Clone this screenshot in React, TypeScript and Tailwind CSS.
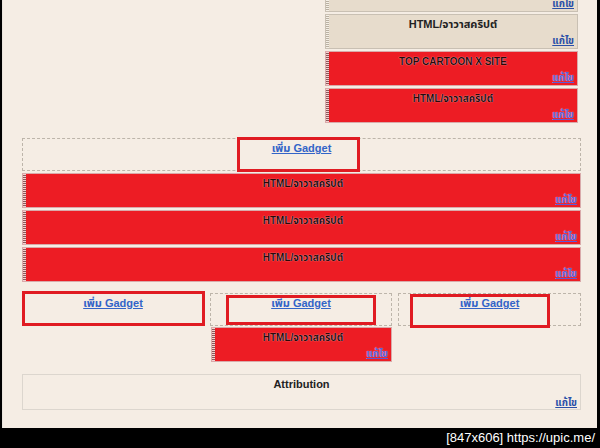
const font = "font-['Liberation_Sans','Noto_Sans','Noto_Sans_Thai',sans-serif]";

function EditLink({ onRed }: { onRed?: boolean }) {
  return (
    <a
      href="#"
      className={
        onRed
          ? "text-[10px] font-bold underline text-[#5a5ad8] [text-shadow:0_0_1px_#fff]"
          : "text-[10px] font-bold underline text-[#2a4fa8]"
      }
    >
      แก้ไข
    </a>
  );
}

function Strip({ light }: { light?: boolean }) {
  return (
    <div
      className={
        light
          ? "w-[3px] shrink-0 bg-[repeating-linear-gradient(0deg,#f4efe6_0_1px,#b9b0a2_1px_2px)]"
          : "w-[3px] shrink-0 bg-[repeating-linear-gradient(0deg,#f6d0d0_0_1px,#8a5a5a_1px_2px)]"
      }
    />
  );
}

function BeigeBox({ title }: { title: string }) {
  return (
    <div className="flex h-[35px] border border-[#c9c0b3] bg-[#e7dccc]">
      <Strip light />
      <div className="flex flex-1 flex-col px-[3px] pt-[3px]">
        <div className="text-center text-[11px] leading-[13px] font-bold text-[#222]">{title}</div>
        <div className="mt-auto pb-[1px] text-right leading-[13px]">
          <EditLink />
        </div>
      </div>
    </div>
  );
}

function RedBox({ title, className = "" }: { title: string; className?: string }) {
  return (
    <div className={`flex h-[35px] border border-[#d9aaaa] bg-[#ed1c24] ${className}`}>
      <Strip />
      <div className="flex flex-1 flex-col px-[3px] pt-[3px]">
        <div className="text-center text-[10px] leading-[13px] font-bold text-[#2a0808] [text-shadow:0_0_1px_#fff]">
          {title}
        </div>
        <div className="mt-auto pb-[1px] text-right leading-[13px]">
          <EditLink onRed />
        </div>
      </div>
    </div>
  );
}

function AddGadget({ outline }: { outline: string }) {
  return (
    <div className="relative h-[33px] border border-dashed border-[#bdb5aa] pt-[1px] text-center leading-[13px]">
      <a href="#" className="text-[11px] leading-[13px] font-bold underline text-[#3364c8]">
        เพิ่ม Gadget
      </a>
      <div className={`absolute border-[3px] border-[#e01b22] ${outline}`} />
    </div>
  );
}

export default function App() {
  return (
    <div className={`flex h-[448px] w-[600px] flex-col bg-black ${font}`}>
      <div className="ml-[2px] mr-[3px] h-[428px] overflow-hidden border-l border-[#e9e4dc] bg-[#f5ede4]">
        <div className="-mt-[23px] ml-[322px] flex w-[253px] flex-col gap-[2px]">
          <BeigeBox title="HTML/จาวาสคริปต์" />
          <BeigeBox title="HTML/จาวาสคริปต์" />
          <RedBox title="TOP CARTOON X SITE" />
          <RedBox title="HTML/จาวาสคริปต์" />
        </div>

        <div className="ml-[19px] mt-[15px] flex w-[559px] flex-col">
          <AddGadget outline="-top-[2px] left-[214px] h-[35px] w-[123px]" />
          <div className="mt-[2px] flex flex-col gap-[2px]">
            <RedBox title="HTML/จาวาสคริปต์" />
            <RedBox title="HTML/จาวาสคริปต์" />
            <RedBox title="HTML/จาวาสคริปต์" />
          </div>

          <div className="mt-[11px] flex gap-[6px]">
            <div className="w-[182px]">
              <AddGadget outline="-top-[3px] -left-[1px] h-[35px] w-[183px]" />
            </div>
            <div className="flex w-[182px] flex-col">
              <AddGadget outline="top-[1px] left-[15px] h-[30px] w-[150px]" />
              <RedBox title="HTML/จาวาสคริปต์" className="ml-[1px] mt-[1px]" />
            </div>
            <div className="w-[183px]">
              <AddGadget outline="top-[0px] left-[11px] h-[34px] w-[140px]" />
            </div>
          </div>

          <div className="mt-[12px] flex h-[36px] flex-col border border-[#dcd6ce] px-[3px] pt-[3px]">
            <div className="text-center text-[11px] leading-[13px] font-bold text-[#222]">Attribution</div>
            <div className="mt-auto text-right leading-[13px]">
              <EditLink />
            </div>
          </div>
        </div>
      </div>
      <div className="flex h-[20px] items-center justify-end pr-[5px] text-[13px] text-white">
        [847x606] https://upic.me/
      </div>
    </div>
  );
}
